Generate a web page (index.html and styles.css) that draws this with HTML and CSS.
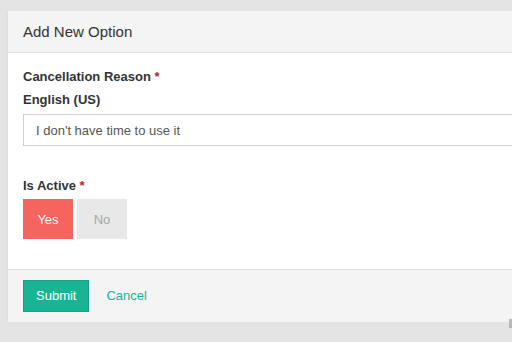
FILE: index.html
```html
<!DOCTYPE html>
<html lang="en">
<head>
  <meta charset="UTF-8" />
  <meta name="viewport" content="width=device-width, initial-scale=1.0"/>
  <title>Add New Option</title>
  <link rel="stylesheet" href="styles.css">
</head>
<body>
  <div class="panel">
    <div class="panel-head">Add New Option</div>
    <form class="panel-body">
      <!-- Reason -->
      <label class="field-label">Cancellation Reason <span class="req">*</span></label>
      <label class="sub-label" for="reason">English (US)</label>
      <input type="text" id="reason" class="input" value="I don't have time to use it" />

      <!-- Active toggle -->
      <label class="field-label active-label">Is Active <span class="req">*</span></label>
      <div class="toggle">
        <button type="button" class="toggle-btn on">Yes</button>
        <button type="button" class="toggle-btn off">No</button>
      </div>
    </form>
    <div class="panel-foot">
      <button type="submit" class="btn">Submit</button>
      <a href="#" class="cancel">Cancel</a>
    </div>
  </div>
  <div class="scroll-nub"></div>
</body>
</html>
```

FILE: styles.css
```css
body {
  margin: 0;
  padding: 11px 0 0 8px;
  background-color: #e4e4e4;
  font-family: "Liberation Sans", Arial, sans-serif;
  color: #333;
  overflow: hidden;
}
.panel {
  width: 540px;
  background: white;
  box-shadow: 0 1px 2px rgba(0,0,0,0.08);
}
.panel-head {
  height: 41px;
  line-height: 42px;
  padding-left: 15px;
  background: #f4f4f4;
  border-bottom: 1px solid #dedede;
  font-size: 15px;
  color: #333;
}
.panel-body {
  padding: 15px 15px 30px;
  height: 171px;
}
.field-label {
  display: block;
  font-size: 13px;
  font-weight: bold;
  line-height: 18px;
}
.req {
  color: #b01f3b;
}
.sub-label {
  display: block;
  margin-top: 5px;
  font-size: 13px;
  font-weight: bold;
  line-height: 18px;
}
.input {
  display: block;
  box-sizing: border-box;
  width: 520px;
  height: 32px;
  margin-top: 5px;
  padding: 0 12px;
  border: 1px solid #cfcfcf;
  font-family: inherit;
  font-size: 13px;
  color: #555;
}
.active-label {
  margin-top: 31px;
}
.toggle {
  display: flex;
  gap: 4px;
  margin-top: 4px;
}
.toggle-btn {
  width: 50px;
  height: 40px;
  border: none;
  font-family: inherit;
  font-size: 13px;
}
.on {
  background-color: #f5645f;
  color: white;
}
.off {
  background-color: #e8e8e8;
  color: #a6a6a6;
}
.panel-foot {
  display: flex;
  align-items: center;
  gap: 17px;
  height: 52px;
  padding-left: 15px;
  background: #f4f4f4;
  border-top: 1px solid #dcdcdc;
}
.btn {
  height: 32px;
  margin-top: -1px;
  padding: 0 12px;
  background-color: #1ab394;
  border: 1px solid #17a185;
  color: white;
  font-family: inherit;
  font-size: 13px;
}
.cancel {
  margin-top: -1px;
  color: #1ab394;
  font-size: 13px;
  text-decoration: none;
}
.scroll-nub {
  position: absolute;
  left: 509px;
  top: 319px;
  width: 3px;
  height: 9px;
  background: #b8b8b8;
}
```
